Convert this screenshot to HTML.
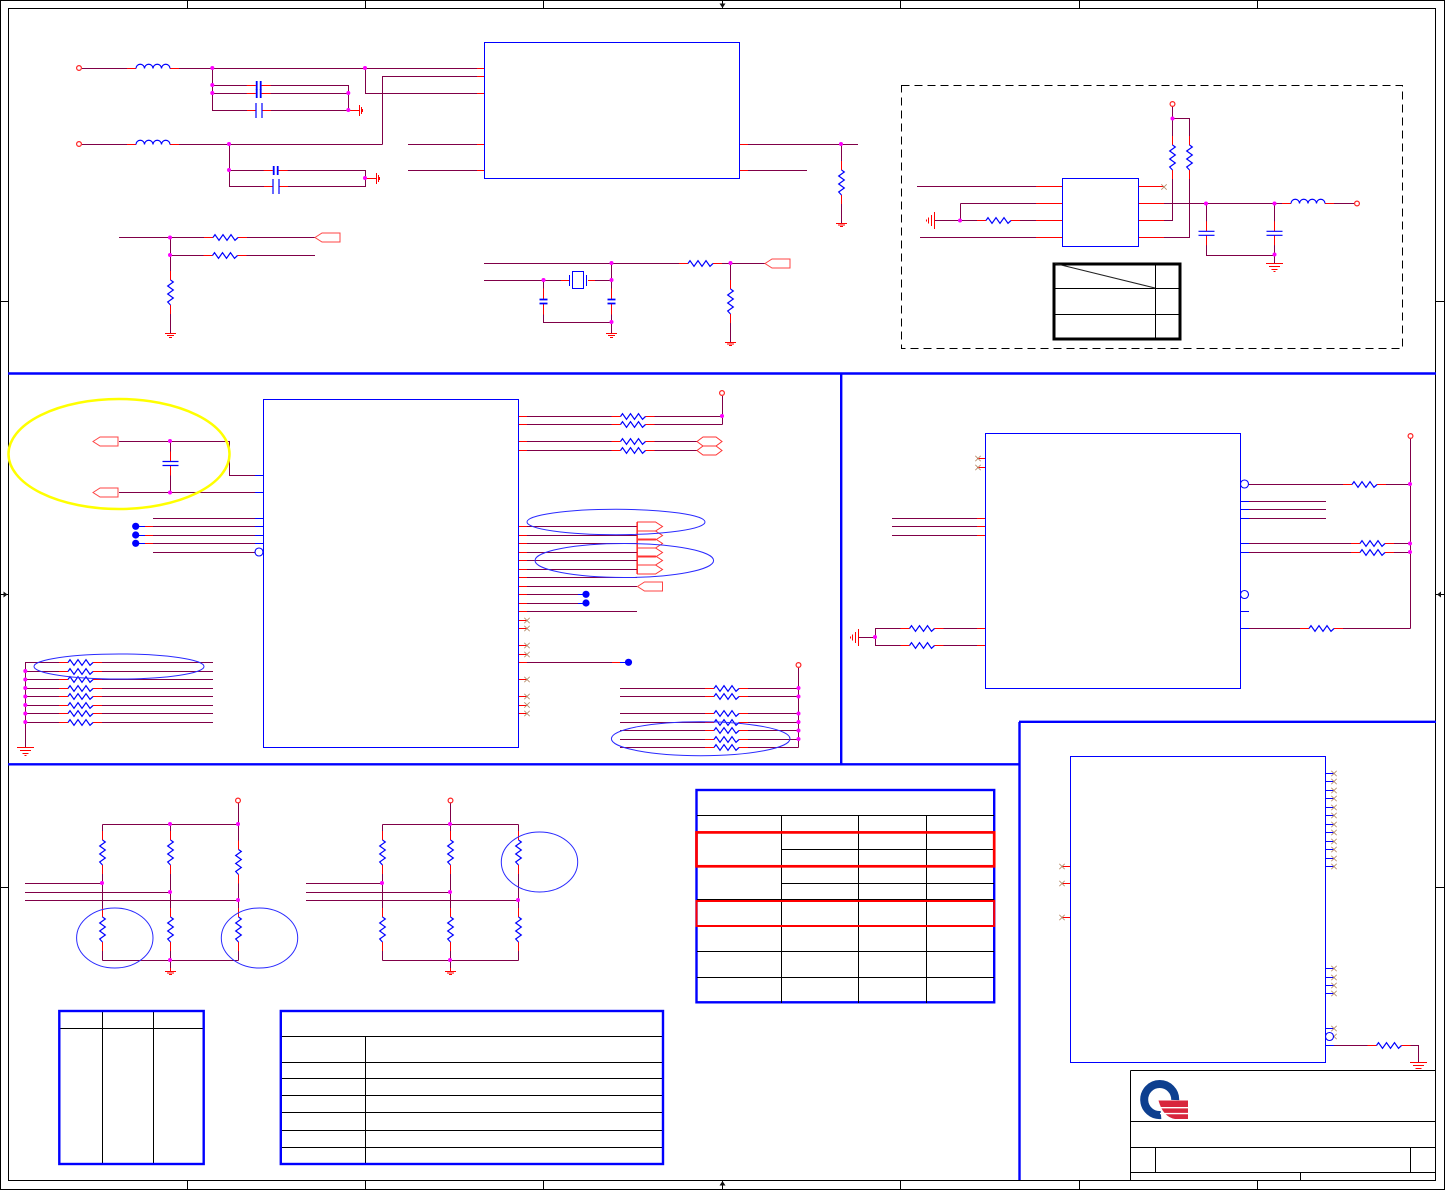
<!DOCTYPE html>
<html lang="en"><head><meta charset="utf-8"><title>Schematic</title>
<style>
html,body{margin:0;padding:0;background:#fff;width:1445px;height:1190px;overflow:hidden}
svg{display:block;position:absolute;left:0;top:0}
.w,.r,.b,.k{fill:none;shape-rendering:crispEdges}
.w{stroke:#800048;stroke-width:1}
.r{stroke:#f00;stroke-width:1}
.b{stroke:#00f;stroke-width:1}
.k{stroke:#000;stroke-width:1}
.bt{fill:none;stroke:#00f;stroke-width:2.4}
.e{fill:none;stroke:#2a2aff;stroke-width:1}
</style></head><body>
<svg width="1445" height="1190" viewBox="0 0 1445 1190">
<defs>
<path id="z" d="M0 0l2-2.800 4 5.600 4-5.600 4 5.600 4-5.600 4 5.600 3-2.800" fill="none" stroke="#00f" stroke-width="1.200"/>
<g id="rh"><path d="M0 0H25" stroke="#fff" stroke-width="2"/><path d="M-9 0H0M25 0H34" stroke="#f00" stroke-width="1"/><use href="#z"/></g>
<g id="rv"><use href="#rh" transform="rotate(90)"/></g>
<g id="lh"><path d="M0 0H34" stroke="#fff" stroke-width="2"/><path d="M-9 0H0M34 0H43" stroke="#f00" stroke-width="1"/><path d="M0 0a4.250 4.250 0 0 1 8.500 0a4.250 4.250 0 0 1 8.500 0a4.250 4.250 0 0 1 8.500 0a4.250 4.250 0 0 1 8.500 0" fill="none" stroke="#00f" stroke-width="1.200"/></g>
<circle id="j" r="2" fill="#f0f"/>
<circle id="d" r="3.600" fill="#00f"/>
<circle id="o" r="4" fill="#fff" stroke="#00f" stroke-width="1.100"/>
<circle id="cp" r="2.400" fill="#fff" stroke="#f22" stroke-width="1.200"/>
<path id="x" d="M-2.700-2.700L2.700 2.700M-2.700 2.700L2.700-2.700" stroke="#b58a68" stroke-width=".8" fill="none"/>
<path id="gs" d="M-5.500 0H5.500M-3.500 2H3.500M-1.500 4H1.500" stroke="#f00" stroke-width="1" fill="none" shape-rendering="crispEdges"/>
<path id="gt" d="M-5.500 0H5.500M-3.500 1.500H3.500M-1.500 3H1.500" stroke="#f00" stroke-width="1" fill="none" shape-rendering="crispEdges"/>
<path id="gl" d="M-8.500 0H8.500M-5.500 3H5.500M-3 6H3M-1 8H1" stroke="#f00" stroke-width="1" fill="none" shape-rendering="crispEdges"/>
<path id="gr" d="M0-5.500V5.500M2-3.500V3.500M3-1.500V1.500" stroke="#f00" stroke-width="1" fill="none" shape-rendering="crispEdges"/>
<path id="glf" d="M0-8.500V8.500M-3-5.500V5.500M-6-3V3M-8-1V1" stroke="#f00" stroke-width="1" fill="none" shape-rendering="crispEdges"/>
<path id="pl" d="M0 0L7-4.500H25V4.500H7Z" fill="none" stroke="#f44" stroke-width="1"/>
<path id="pr" d="M0-4.500H18L25 0 18 4.500H0Z" fill="none" stroke="#f33" stroke-width="1"/>
<path id="ph" d="M0 0L6-4.500H19L25 0 19 4.500H6Z" fill="none" stroke="#f33" stroke-width="1"/>
<g id="c1"><path d="M-3 0H3" stroke="#fff" stroke-width="2"/><path d="M-12 0H-3M3 0H12" stroke="#f00"/><path d="M-2-4.500V4.500M2-4.500V4.500" stroke="#00f" stroke-width="1.800"/></g>
<g id="c2"><path d="M-3 0H3" stroke="#fff" stroke-width="2"/><path d="M-12 0H-3M3 0H12" stroke="#f00"/><path d="M-3-7.500V7.500M3-7.500V7.500" stroke="#00f" stroke-width="1.200"/></g>
<g id="c3"><path d="M0-3V3" stroke="#fff" stroke-width="2"/><path d="M0-13V-2M0 2V13" stroke="#f00"/><path d="M-4-2H4M-4 2H4" stroke="#00f" stroke-width="1.700"/></g>
<g id="c4"><path d="M0-2V2" stroke="#fff" stroke-width="2"/><path d="M0-12V-2M0 2V12" stroke="#f00"/><path d="M-8-2H8M-8 2H8" stroke="#00f" stroke-width="1.200"/></g>
</defs>

<!-- frame -->
<path class="k" d="M.5.5H1444.5V1189.500H.5ZM8.500 8.500H1435.500V1180.500H8.500Z"/>
<path class="k" d="M187.500 0V8M365.500 0V8M543.500 0V8M722.500 0V8M900.500 0V8M1079.500 0V8M1257.500 0V8M187.500 1181V1189M365.500 1181V1189M543.500 1181V1189M722.500 1181V1189M900.500 1181V1189M1079.500 1181V1189M1257.500 1181V1189M0 301.500H8M0 594.500H8M0 887.500H8M1436 301.500H1444M1436 594.500H1444M1436 887.500H1444"/>
<path d="M719.500 3.500h6l-3 4.500zM3.500 591.500v6l4-3zM1441 591.500v6l-4-3zM719.500 1185.500h6l-3-4.500z" fill="#111"/>

<!-- section dividers -->
<path d="M8 373.500H1436M841.200 373V764M8 764.300H1019M1019.500 722V1180M1019 721.800H1436" fill="none" stroke="#00f" stroke-width="2.400"/>

<!-- top left power -->
<path class="w" d="M82 68.500H484M212.500 68V110.500H348.500M212 85.500H348.500V110.500M212 93.500H348M365.500 68V93.500H484M382.500 144.500V76.500H484M82 144.500H382.500M229.500 144V186.500H365.500V170.500H229.500M408 144.500H484M408 170.500H484"/>
<path class="r" d="M349 110.500H360M366 178.500H377M477 68.500H484M477 76.500H484M477 93.500H484M477 144.500H484M477 170.500H484"/>
<use href="#lh" x="136" y="68.500"/><use href="#lh" x="136" y="144.500"/>
<use href="#c1" x="258.700" y="85.500"/><use href="#c1" x="258.700" y="93.500"/><use href="#c2" x="259" y="110.500"/>
<use href="#c1" x="275.700" y="170.500"/><use href="#c2" x="276" y="186.500"/>
<use href="#gr" x="359.500" y="110.500"/><use href="#gr" x="376.500" y="178.500"/>
<use href="#cp" x="79" y="68"/><use href="#cp" x="79" y="144"/>
<use href="#j" x="212.300" y="68"/><use href="#j" x="365" y="68"/><use href="#j" x="212.300" y="85"/><use href="#j" x="212.300" y="93"/><use href="#j" x="348.300" y="93"/><use href="#j" x="348.300" y="110"/><use href="#j" x="229" y="144"/><use href="#j" x="229" y="170"/><use href="#j" x="365" y="178"/>

<path class="b" d="M484.500 42.500H739.500V178.500H484.500Z"/>
<path class="w" d="M740 144.500H858M740 170.500H807M841.500 144V224"/>
<path class="r" d="M740 144.500H748M740 170.500H748"/>
<use href="#rv" x="841.500" y="170"/><use href="#j" x="841" y="144"/><use href="#gt" x="841.500" y="223.500"/>

<path class="w" d="M119 237.500H315M170.500 237V333M170 255.500H315"/>
<use href="#rh" x="213" y="237.500"/><use href="#rh" x="212.500" y="255.500"/><use href="#rv" x="170.500" y="280"/>
<use href="#pl" x="315" y="237.500"/><use href="#j" x="170" y="237.500"/><use href="#j" x="170" y="255"/><use href="#gs" x="170.500" y="333.500"/>

<!-- crystal -->
<path class="w" d="M484 263.500H765M484 280.500H561M543.500 280V322.500H611.500M611.500 263V333M595 280.500H611.500"/>
<path class="r" d="M561 280.500H569M588 280.500H595"/>
<path class="b" d="M569.500 275V286M586.500 275V286M572.500 271.500H583.500V288.500H572.500Z"/>
<use href="#c3" x="543.500" y="301.500"/><use href="#c3" x="611.500" y="301.500"/>
<use href="#j" x="543.500" y="280"/><use href="#j" x="611.500" y="263"/><use href="#j" x="611.500" y="280"/><use href="#j" x="611.500" y="322"/><use href="#gs" x="611.500" y="333.500"/>
<path class="w" d="M730.500 263V342"/>
<use href="#rh" x="688" y="263.500"/><use href="#rv" x="730.500" y="289"/><use href="#j" x="730.500" y="263"/><use href="#pl" x="765" y="263.500"/><use href="#gt" x="730.500" y="342.500"/>

<!-- dashed block -->
<path d="M901.500 85.500H1402.500V348.500H901.500Z" fill="none" stroke="#000" stroke-dasharray="8 5" shape-rendering="crispEdges"/>
<path class="w" d="M917 186.500H1062M960.500 203.500H1062M960.500 203.500V220.500M935 220.500H1062M920 237.500H1062M1138 203.500H1354M1138 220.500H1172.500V106M1172.500 118.500H1189.500V237.500H1138M1206.500 203V255.500H1274.500M1274.500 203V263"/>
<path class="r" d="M1036 186.500H1062M1036 203.500H1062M1036 220.500H1062M1036 237.500H1062M1139 186.500H1164M1139 203.500H1164M1139 220.500H1164M1139 237.500H1164"/>
<use href="#x" x="1164" y="187"/>
<use href="#rh" x="986" y="220.500"/><use href="#glf" x="934.500" y="220.500"/><use href="#j" x="960" y="220.500"/>
<path class="b" d="M1062.500 178.500H1138.500V246.500H1062.500Z"/>
<use href="#rv" x="1172.500" y="145"/><use href="#rv" x="1189.500" y="145"/>
<use href="#c4" x="1206.500" y="233.300"/><use href="#c4" x="1274.500" y="233.300"/>
<use href="#lh" x="1291" y="203.500"/><use href="#cp" x="1357" y="203.500"/><use href="#cp" x="1172.500" y="104"/>
<use href="#j" x="1172.500" y="118.500"/><use href="#j" x="1206" y="203.500"/><use href="#j" x="1274.500" y="203.500"/><use href="#j" x="1274.500" y="254.500"/>
<use href="#gl" x="1274.500" y="263.500"/>
<rect x="1054" y="264" width="126" height="75" fill="none" stroke="#000" stroke-width="3"/>
<path class="k" d="M1155.500 264V339M1054 288.500H1180M1054 314.500H1180"/>
<path d="M1055 263.500L1155 288" stroke="#222" stroke-width="1" fill="none"/>

<!-- middle-left IC -->
<path class="b" d="M263.500 399.500H518.500V747.500H263.500Z"/>
<path class="w" d="M119 441.500H229.500V475.500H263M170.500 441V492M119 492.500H263M153 518.500H263M145 526.500H263M145 535.500H263M145 543.500H263M153 552.500H255"/>
<path class="b" d="M255 475.500H263M255 492.500H263M255 518.500H263M255 526.500H263M255 535.500H263M255 543.500H263M139 526.500H145M139 535.500H145M139 543.500H145"/>
<path class="r" d="M145 526.500H153M145 535.500H153M145 543.500H153"/>
<use href="#d" x="135.700" y="526.300"/><use href="#d" x="135.700" y="535"/><use href="#d" x="135.700" y="543.300"/><use href="#o" x="259" y="552"/>
<use href="#c4" x="170.500" y="463.500"/><use href="#j" x="170" y="441"/><use href="#j" x="170" y="492.500"/>
<use href="#pl" x="93" y="441.500"/><use href="#pl" x="93" y="492.500"/>
<ellipse cx="119" cy="454" rx="110.500" ry="55" fill="none" stroke="#ffff00" stroke-width="2.500"/>

<!-- resistor array -->
<path class="w" d="M25.500 662.500V748M25 662.500H213M25 671.500H213M25 679.500H213M25 688.500H213M25 696.500H213M25 705.500H213M25 713.500H213M25 722.500H213"/>
<use href="#rh" x="68" y="662.500"/><use href="#rh" x="68" y="671.500"/><use href="#rh" x="68" y="679.500"/><use href="#rh" x="68" y="688.500"/><use href="#rh" x="68" y="696.500"/><use href="#rh" x="68" y="705.500"/><use href="#rh" x="68" y="713.500"/><use href="#rh" x="68" y="722.500"/>
<use href="#j" x="25.300" y="671"/><use href="#j" x="25.300" y="679.500"/><use href="#j" x="25.300" y="688"/><use href="#j" x="25.300" y="696.500"/><use href="#j" x="25.300" y="705"/><use href="#j" x="25.300" y="713.500"/><use href="#j" x="25.300" y="722"/>
<use href="#gl" x="25.500" y="747.500"/>
<ellipse class="e" cx="119" cy="666.500" rx="85" ry="12.500"/>

<!-- middle-left IC right side -->
<path class="w" d="M519 416.500H722.500M519 424.500H722.500M722.500 396V424.500M519 441.500H697M519 450.500H697M519 526.500H637M519 535.500H637M519 543.500H637M519 552.500H637M519 560.500H637M519 569.500H637M519 577.500H637M519 586.500H637M519 594.500H583M519 603.500H583M519 611.500H637M519 662.500H612"/>
<path class="r" d="M519 416.500H527M519 424.500H527M519 441.500H527M519 450.500H527M519 526.500H527M519 535.500H527M519 543.500H527M519 552.500H527M519 560.500H527M519 569.500H527M519 577.500H527M519 586.500H527M519 594.500H527M519 603.500H527M519 611.500H527M519 620.500H527M519 628.500H527M519 645.500H527M519 654.500H527M519 679.500H527M519 696.500H527M519 705.500H527M519 713.500H527M519 662.500H527M612 662.500H620M637 522V574"/>
<path class="b" d="M620 662.500H626M578 594.500H584M578 603.500H584"/>
<use href="#rh" x="620.500" y="416.500"/><use href="#rh" x="620.500" y="424.500"/><use href="#rh" x="620.500" y="441.500"/><use href="#rh" x="620.500" y="450.500"/>
<use href="#j" x="722" y="416"/><use href="#cp" x="722" y="393"/>
<use href="#ph" x="697" y="441.500"/><use href="#ph" x="697" y="450.500"/>
<use href="#pr" x="637.500" y="526.500"/><use href="#pr" x="637.500" y="535.500"/><use href="#pr" x="637.500" y="543.500"/><use href="#pr" x="637.500" y="552.500"/><use href="#pr" x="637.500" y="560.500"/><use href="#pr" x="637.500" y="569.500"/>
<use href="#pl" x="637.500" y="586.500"/>
<use href="#d" x="586" y="594.300"/><use href="#d" x="586" y="603"/><use href="#d" x="628.500" y="662.300"/>
<use href="#x" x="527" y="620.500"/><use href="#x" x="527" y="628.500"/><use href="#x" x="527" y="645.500"/><use href="#x" x="527" y="654.500"/><use href="#x" x="527" y="679.500"/><use href="#x" x="527" y="696.500"/><use href="#x" x="527" y="705"/><use href="#x" x="527" y="713.500"/>
<ellipse class="e" cx="616" cy="522" rx="89" ry="12.700"/>
<ellipse class="e" cx="624.300" cy="560.500" rx="89.300" ry="17"/>

<path class="w" d="M620 688.500H798.500M620 696.500H798.500M620 713.500H798.500M620 722.500H798.500M620 730.500H798.500M620 739.500H798.500M620 747.500H798.500M798.500 668V747.500"/>
<use href="#rh" x="714" y="688.500"/><use href="#rh" x="714" y="696.500"/><use href="#rh" x="714" y="713.500"/><use href="#rh" x="714" y="722.500"/><use href="#rh" x="714" y="730.500"/><use href="#rh" x="714" y="739.500"/><use href="#rh" x="714" y="747.500"/>
<use href="#cp" x="798.500" y="665"/>
<use href="#j" x="798.500" y="688"/><use href="#j" x="798.500" y="696.500"/><use href="#j" x="798.500" y="713.500"/><use href="#j" x="798.500" y="722"/><use href="#j" x="798.500" y="730.500"/><use href="#j" x="798.500" y="739"/>
<ellipse class="e" cx="700.700" cy="738.700" rx="89.300" ry="17"/>

<!-- middle-right IC -->
<path class="b" d="M985.500 433.500H1240.500V688.500H985.500Z"/>
<path class="w" d="M892 518.500H985M892 526.500H985M892 535.500H985M875.500 628.500V645.500M875 628.500H985M875 645.500H985M859 637.500H875M1249 484.500H1410.500M1249 501.500H1326M1249 509.500H1326M1249 518.500H1326M1249 543.500H1410.500M1249 552.500H1410.500M1249 628.500H1410.500M1410.500 439V628.500"/>
<path class="r" d="M977 458.500H985M977 467.500H985M977 518.500H985M977 526.500H985M977 535.500H985M977 628.500H985M977 645.500H985"/>
<path class="b" d="M1241 501.500H1249M1241 509.500H1249M1241 518.500H1249M1241 543.500H1249M1241 552.500H1249M1241 611.500H1249M1241 628.500H1249"/>
<use href="#x" x="978" y="458.500"/><use href="#x" x="978" y="467.500"/>
<use href="#rh" x="909.500" y="628.500"/><use href="#rh" x="909.500" y="645.500"/><use href="#glf" x="858.500" y="637.500"/><use href="#j" x="875" y="637"/>
<use href="#o" x="1244.500" y="484"/><use href="#o" x="1244.500" y="594.500"/>
<use href="#rh" x="1352" y="484.500"/><use href="#rh" x="1360" y="543.500"/><use href="#rh" x="1360" y="552.500"/><use href="#rh" x="1309" y="628.500"/>
<use href="#cp" x="1410.500" y="436"/><use href="#j" x="1410" y="484"/><use href="#j" x="1410" y="543.500"/><use href="#j" x="1410" y="552"/>

<!-- divider networks -->
<path class="w" d="M102.500 824.500H238.500M102.500 960.500H238.500M102.500 824.500V960.500M170.500 824V972M238.500 803V960.500M25 883.500H102.500M25 892.500H170.500M25 900.500H238.500M382.500 824.500H518.500M382.500 960.500H518.500M382.500 824.500V960.500M450.500 803V972M518.500 824.500V960.500M306 883.500H382.500M306 892.500H450.500M306 900.500H518.500"/>
<use href="#rv" x="102.500" y="840"/><use href="#rv" x="170.500" y="840"/><use href="#rv" x="238.500" y="849.500"/>
<use href="#rv" x="102.500" y="917"/><use href="#rv" x="170.500" y="917"/><use href="#rv" x="238.500" y="917"/>
<use href="#rv" x="382.500" y="840"/><use href="#rv" x="450.500" y="840"/><use href="#rv" x="518.500" y="840"/>
<use href="#rv" x="382.500" y="917"/><use href="#rv" x="450.500" y="917"/><use href="#rv" x="518.500" y="917"/>
<use href="#cp" x="238" y="800.500"/><use href="#cp" x="450.500" y="800.500"/>
<use href="#j" x="170" y="824"/><use href="#j" x="238" y="824"/><use href="#j" x="450" y="824"/>
<use href="#j" x="102" y="883"/><use href="#j" x="170" y="892"/><use href="#j" x="238" y="900"/><use href="#j" x="382" y="883"/><use href="#j" x="450" y="892"/><use href="#j" x="518" y="900"/>
<use href="#j" x="170" y="960"/><use href="#j" x="450" y="960"/>
<use href="#gt" x="170.500" y="971.500"/><use href="#gt" x="450.500" y="971.500"/>
<path class="r" d="M170.500 968V972M450.500 968V972"/>
<ellipse class="e" cx="114.800" cy="938" rx="38.200" ry="30"/>
<ellipse class="e" cx="259.500" cy="938" rx="38.200" ry="30"/>
<ellipse class="e" cx="539.500" cy="862" rx="38.200" ry="30"/>

<!-- table left -->
<path class="k" d="M60 1028.500H204M102.500 1011V1164M153.500 1011V1164"/>
<rect class="bt" x="59.300" y="1011" width="144.400" height="153"/>
<!-- table bottom -->
<path class="k" d="M281 1036.500H663M281 1062.500H663M281 1078.500H663M281 1095.500H663M281 1112.500H663M281 1130.500H663M281 1147.500H663M365.500 1036V1164"/>
<rect class="bt" x="280.800" y="1011" width="382.200" height="153"/>
<!-- table middle -->
<rect class="bt" x="696.500" y="790" width="297.700" height="212.300"/>
<path class="k" d="M697 815.500H994M781.500 815V1003M858.500 815V1003M926.500 815V1003M781 849.500H994M781 883.500H994M697 899.500H994M697 951.500H994M697 977.500H994"/>
<rect x="696.500" y="832.400" width="297.700" height="33.900" fill="none" stroke="#f00" stroke-width="2.700"/>
<rect x="696.500" y="901" width="297.700" height="25" fill="none" stroke="#f00" stroke-width="2"/>

<!-- bottom-right IC -->
<path class="b" d="M1070.500 756.500H1325.500V1062.500H1070.500Z"/>
<path class="b" d="M1326 773.500H1334M1326 781.500H1334M1326 790.500H1334M1326 798.500H1334M1326 807.500H1334M1326 815.500H1334M1326 824.500H1334M1326 832.500H1334M1326 841.500H1334M1326 849.500H1334M1326 858.500H1334M1326 866.500H1334M1326 968.500H1334M1326 977.500H1334M1326 985.500H1334M1326 993.500H1334M1326 1028.500H1334M1326 1045.500H1334"/>
<path class="r" d="M1062 866.500H1070M1062 883.500H1070M1062 917.500H1070"/>
<use href="#x" x="1334" y="773.500"/><use href="#x" x="1334" y="781.500"/><use href="#x" x="1334" y="790.500"/><use href="#x" x="1334" y="798.500"/><use href="#x" x="1334" y="807.500"/><use href="#x" x="1334" y="815.500"/><use href="#x" x="1334" y="824.500"/><use href="#x" x="1334" y="832.500"/><use href="#x" x="1334" y="841.500"/><use href="#x" x="1334" y="849.500"/><use href="#x" x="1334" y="858.500"/><use href="#x" x="1334" y="866.500"/>
<use href="#x" x="1334" y="968.500"/><use href="#x" x="1334" y="977.500"/><use href="#x" x="1334" y="985.500"/><use href="#x" x="1334" y="993.500"/><use href="#x" x="1334" y="1028.500"/><use href="#x" x="1334" y="1036.500"/>
<use href="#x" x="1062" y="866.500"/><use href="#x" x="1062" y="883.500"/><use href="#x" x="1062" y="917.500"/>
<use href="#o" x="1329.500" y="1036.500"/>
<path class="w" d="M1334 1045.500H1418.500V1062"/>
<use href="#rh" x="1376.500" y="1045.500"/>
<use href="#gl" x="1418.500" y="1062.500"/>

<!-- title block -->
<path class="k" d="M1130.500 1070.500H1435.500M1130.500 1070.500V1180M1130 1121.500H1435M1130 1147.500H1435M1130 1172.500H1435M1155.500 1147V1172M1410.500 1147V1172M1300.500 1172V1180"/>
<path d="M1175.200 1100A15.500 15.500 0 1 0 1161 1115" fill="none" stroke="#0d3f8f" stroke-width="8"/>
<path d="M1158.500 1100.500H1188V1119H1175Q1163 1117 1158.500 1100.500Z" fill="#d8263c"/>
<path d="M1160 1107.700H1188M1160 1113.600H1188" stroke="#fff" stroke-width="1.400"/>
</svg>
</body></html>
